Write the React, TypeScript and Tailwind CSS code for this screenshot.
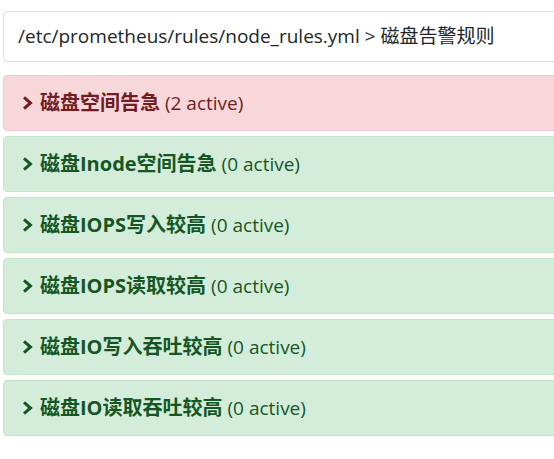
import React from 'react';

const groups = [
  { name: '磁盘空间告急', active: 2 },
  { name: '磁盘Inode空间告急', active: 0 },
  { name: '磁盘IOPS写入较高', active: 0 },
  { name: '磁盘IOPS读取较高', active: 0 },
  { name: '磁盘IO写入吞吐较高', active: 0 },
  { name: '磁盘IO读取吞吐较高', active: 0 },
];

const Chevron: React.FC = () => (
  <svg width="11" height="14" viewBox="0 0 11 14" className="shrink-0">
    <polyline points="2,1.3 8.5,7 2,12.7" fill="none" stroke="currentColor" strokeWidth="3" />
  </svg>
);

const App: React.FC = () => {
  return (
    <div
      className="w-full min-h-screen overflow-hidden bg-white pt-[11px]"
      style={{ fontFamily: '"Open Sans", "Noto Sans CJK SC", sans-serif' }}
    >
      <div className="ml-[3px] w-[570px] h-[51px] flex items-center pl-[14px] border border-[#dedede] rounded-[4px] text-[19px] text-[#212529]">
        /etc/prometheus/rules/node_rules.yml &gt; 磁盘告警规则
      </div>

      <div className="mt-[13px] flex flex-col gap-[5px]">
        {groups.map((g, i) => {
          const firing = g.active > 0;
          return (
            <div
              key={i}
              className={`ml-[3px] w-[570px] h-[56px] flex items-center pl-[18px] gap-[7px] border rounded-[4px] text-[19px] ${
                firing
                  ? 'bg-[#f8d7da] border-[#f5c6cb] text-[#721c24]'
                  : 'bg-[#d4edda] border-[#c3e6cb] text-[#155724]'
              }`}
            >
              <Chevron />
              <span className="leading-none">
                <b className="font-bold text-[20px]">{g.name}</b> ({g.active} active)
              </span>
            </div>
          );
        })}
      </div>
    </div>
  );
};

export default App;
